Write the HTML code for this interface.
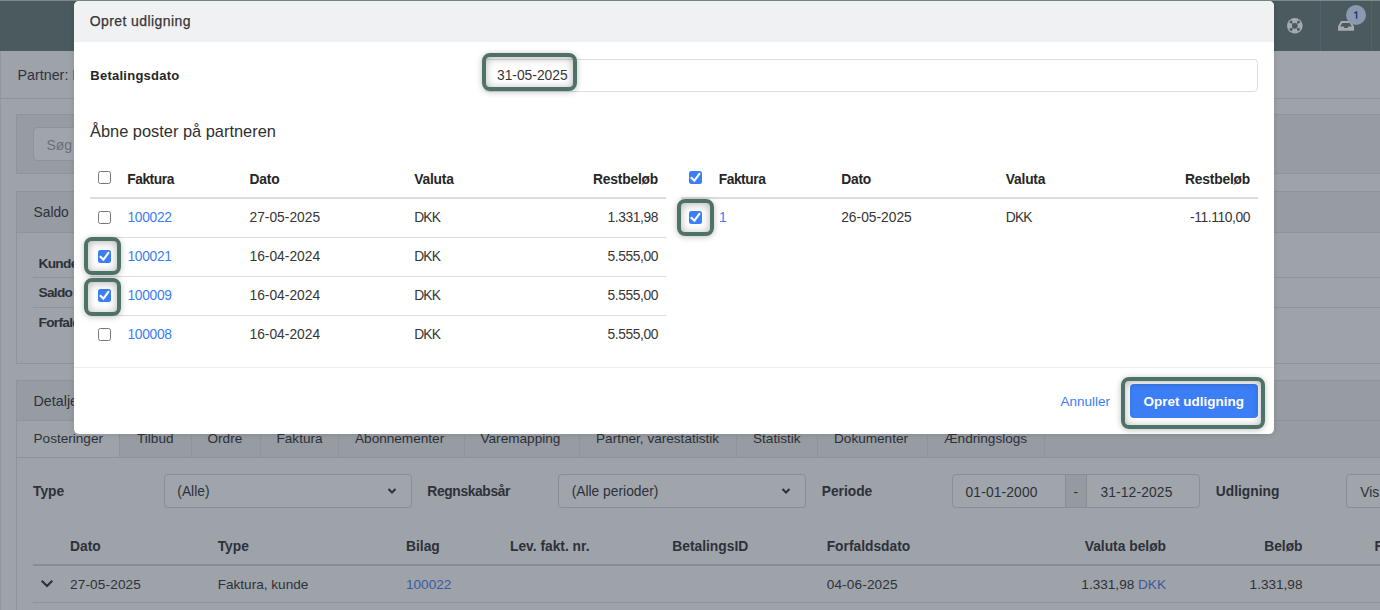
<!DOCTYPE html>
<html><head><meta charset="utf-8">
<style>
*{box-sizing:border-box;margin:0;padding:0}
html,body{width:1380px;height:610px;overflow:hidden}
body{position:relative;font-family:"Liberation Sans",sans-serif;font-size:13px;color:#2c2f33;background:#9ea2a9}
.a{position:absolute;white-space:nowrap;line-height:normal}
.bgtxt{color:#2d3139}
.bgb{font-weight:bold;color:#2d3139}
.t{color:#363636}
.b{font-weight:bold;color:#262626}
.lnk{color:#3b7ef6}
.cb{position:absolute;width:13px;height:13px;border:1px solid #767676;border-radius:2.5px;background:#fff}
.cbc{position:absolute;width:13px;height:13px;border-radius:2.5px;background:#3b7ef6}
.cbc svg{position:absolute;left:0;top:0}
.hl{position:absolute;border:4px solid #4e7268;border-radius:8px;box-shadow:inset 0 1px 8px rgba(0,0,0,.3),0 1px 6px rgba(0,0,0,.25)}
</style></head><body>
<div class="a" style="left:0px;top:0px;width:1380px;height:1px;background:#7b8b89"></div>
<div class="a" style="left:0px;top:1px;width:1380px;height:50px;background:#4a5a5f"></div>
<div class="a" style="left:1320px;top:1px;width:1px;height:50px;background:#53636a"></div>
<div class="a" style="left:1371px;top:1px;width:1px;height:50px;background:#53636a"></div>
<svg class="a" style="left:1286px;top:17px" width="18" height="18" viewBox="0 0 18 18">
<circle cx="8.8" cy="8.8" r="7.8" fill="#a6a9ae"/><circle cx="8.8" cy="8.8" r="2.9" fill="#4a5a5f"/>
<g fill="#4a5a5f">
<path id="wd" d="M7.1 2.8 L8.8 2.1 L10.5 2.8 L9.6 4.8 L8.8 5.8 L8.0 4.8 Z" transform="rotate(-45 8.8 8.8)"/>
<path d="M7.1 2.8 L8.8 2.1 L10.5 2.8 L9.6 4.8 L8.8 5.8 L8.0 4.8 Z" transform="rotate(45 8.8 8.8)"/>
<path d="M7.1 2.8 L8.8 2.1 L10.5 2.8 L9.6 4.8 L8.8 5.8 L8.0 4.8 Z" transform="rotate(135 8.8 8.8)"/>
<path d="M7.1 2.8 L8.8 2.1 L10.5 2.8 L9.6 4.8 L8.8 5.8 L8.0 4.8 Z" transform="rotate(225 8.8 8.8)"/>
</g>
</svg>
<svg class="a" style="left:1337px;top:19px" width="18" height="14" viewBox="0 0 18 14">
<path d="M1 7.5 L4 2 L14 2 L17 7.5 L17 11.2 Q17 11.8 16.4 11.8 L1.6 11.8 Q1 11.8 1 11.2 Z" fill="#a6a9ae"/>
<path d="M3.2 7.5 L5.2 4 L12.8 4 L14.8 7.5 L11.5 7.5 L10.5 9 L7.5 9 L6.5 7.5 Z" fill="#4a5a5f"/>
</svg>
<div class="a" style="left:1346px;top:5px;width:20px;height:20px;border-radius:50%;background:#8a99b0"></div>
<svg class="a" style="left:1350px;top:9px" width="12" height="12" viewBox="0 0 12 12"><path d="M4.3 4.2 L6.6 2.9 L6.6 9.8" fill="none" stroke="#2a3470" stroke-width="1.4" stroke-linejoin="round"/></svg>
<div class="a" style="left:0px;top:51px;width:1px;height:560px;background:#93979e"></div>
<div class="a" style="left:0px;top:98px;width:1380px;height:1px;background:#8f939a"></div>
<div class="a " style="left:17.50px;top:66.76px;font-size:14.3px;color:#2e3242">Partner: I</div>
<div class="a" style="left:16px;top:114px;width:1400px;height:60px;background:#979ba2;border:1px solid #8f939a"></div>
<div class="a" style="left:33px;top:127px;width:240px;height:34px;background:#a0a4ab;border:1px solid #8f939a;border-radius:4px"></div>
<div class="a " style="left:46.40px;top:137.03px;font-size:14px;color:#6b717c">Søg</div>
<div class="a" style="left:16px;top:191px;width:1400px;height:173px;background:#9ea2a9;border:1px solid #8f939a"></div>
<div class="a" style="left:17px;top:192px;width:1400px;height:41px;background:#979ba2;border-bottom:1px solid #8f939a"></div>
<div class="a " style="left:33.50px;top:204.61px;font-size:13.8px;color:#2d3139">Saldo</div>
<div class="a bgb" style="left:38.50px;top:255.90px;font-size:13.7px;letter-spacing:-.7px">Kunde</div>
<div class="a" style="left:33px;top:277px;width:1400px;height:1px;background:#8f939a"></div>
<div class="a bgb" style="left:38.50px;top:285.40px;font-size:13.7px;letter-spacing:-.7px">Saldo</div>
<div class="a" style="left:33px;top:307px;width:1400px;height:1px;background:#8f939a"></div>
<div class="a bgb" style="left:38.50px;top:314.60px;font-size:13.7px;letter-spacing:-.7px">Forfald</div>
<div class="a" style="left:16px;top:380px;width:1400px;height:300px;background:#9ea2a9;border:1px solid #8f939a"></div>
<div class="a" style="left:17px;top:381px;width:1400px;height:76px;background:#979ba2"></div>
<div class="a" style="left:17px;top:420px;width:1400px;height:1px;background:#8f939a"></div>
<div class="a" style="left:17px;top:457px;width:1400px;height:1px;background:#8f939a"></div>
<div class="a " style="left:33.50px;top:393.06px;font-size:14.3px;color:#2d3139">Detaljer</div>
<div class="a" style="left:17px;top:421px;width:102px;height:36px;background:#9ea2a9"></div>
<div class="a bgtxt" style="left:33.50px;top:431.09px;font-size:13.6px;">Posteringer</div>
<div class="a" style="left:119px;top:421px;width:1px;height:36px;background:#8f939a"></div>
<div class="a bgtxt" style="left:137.00px;top:431.09px;font-size:13.6px;">Tilbud</div>
<div class="a" style="left:191px;top:421px;width:1px;height:36px;background:#8f939a"></div>
<div class="a bgtxt" style="left:207.50px;top:431.09px;font-size:13.6px;">Ordre</div>
<div class="a" style="left:260px;top:421px;width:1px;height:36px;background:#8f939a"></div>
<div class="a bgtxt" style="left:276.50px;top:431.09px;font-size:13.6px;">Faktura</div>
<div class="a" style="left:338px;top:421px;width:1px;height:36px;background:#8f939a"></div>
<div class="a bgtxt" style="left:355.00px;top:431.09px;font-size:13.6px;">Abonnementer</div>
<div class="a" style="left:464px;top:421px;width:1px;height:36px;background:#8f939a"></div>
<div class="a bgtxt" style="left:480.50px;top:431.09px;font-size:13.6px;">Varemapping</div>
<div class="a" style="left:579px;top:421px;width:1px;height:36px;background:#8f939a"></div>
<div class="a bgtxt" style="left:596.00px;top:431.09px;font-size:13.6px;">Partner, varestatistik</div>
<div class="a" style="left:736px;top:421px;width:1px;height:36px;background:#8f939a"></div>
<div class="a bgtxt" style="left:753.00px;top:431.09px;font-size:13.6px;">Statistik</div>
<div class="a" style="left:817px;top:421px;width:1px;height:36px;background:#8f939a"></div>
<div class="a bgtxt" style="left:834.00px;top:431.09px;font-size:13.6px;">Dokumenter</div>
<div class="a" style="left:927px;top:421px;width:1px;height:36px;background:#8f939a"></div>
<div class="a bgtxt" style="left:944.00px;top:431.09px;font-size:13.6px;">Ændringslogs</div>
<div class="a" style="left:1044px;top:421px;width:1px;height:36px;background:#8f939a"></div>
<div class="a bgb" style="left:33.00px;top:483.51px;font-size:13.8px;">Type</div>
<div class="a" style="left:164px;top:474px;width:248px;height:34px;border:1px solid #898d94;border-radius:4px;background:#a0a4ab"></div>
<div class="a bgtxt" style="left:177.30px;top:483.51px;font-size:13.8px;">(Alle)</div>
<div class="a bgb" style="left:427.30px;top:483.51px;font-size:13.8px;letter-spacing:-.35px">Regnskabsår</div>
<div class="a" style="left:558px;top:474px;width:248px;height:34px;border:1px solid #898d94;border-radius:4px;background:#a0a4ab"></div>
<div class="a bgtxt" style="left:571.70px;top:483.51px;font-size:13.8px;">(Alle perioder)</div>
<div class="a bgb" style="left:821.70px;top:483.51px;font-size:13.8px;">Periode</div>
<div class="a" style="left:952px;top:474px;width:248px;height:34px;border:1px solid #898d94;border-radius:4px;background:#a0a4ab"></div>
<div class="a" style="left:1065px;top:475px;width:22px;height:32px;background:#959aa1;border-left:1px solid #898d94;border-right:1px solid #898d94"></div>
<div class="a bgtxt" style="left:965.50px;top:484.51px;font-size:13.8px;letter-spacing:.15px">01-01-2000</div>
<div class="a bgtxt" style="left:1073.50px;top:484.51px;font-size:13.8px;">-</div>
<div class="a bgtxt" style="left:1100.40px;top:484.51px;font-size:13.8px;letter-spacing:.15px">31-12-2025</div>
<div class="a bgb" style="left:1215.80px;top:483.51px;font-size:13.8px;">Udligning</div>
<div class="a" style="left:1346px;top:474px;width:100px;height:34px;border:1px solid #898d94;border-radius:4px;background:#a0a4ab"></div>
<div class="a bgtxt" style="left:1360.30px;top:484.51px;font-size:13.8px;">Vis</div>
<svg class="a" style="left:386.5px;top:487px" width="10" height="8" viewBox="0 0 10 8"><path d="M1.5 2 L5 5.5 L8.5 2" fill="none" stroke="#2d3139" stroke-width="2"/></svg>
<svg class="a" style="left:780.5px;top:487px" width="10" height="8" viewBox="0 0 10 8"><path d="M1.5 2 L5 5.5 L8.5 2" fill="none" stroke="#2d3139" stroke-width="2"/></svg>
<div class="a bgb" style="left:70.00px;top:538.51px;font-size:13.8px;">Dato</div>
<div class="a bgb" style="left:217.70px;top:538.51px;font-size:13.8px;">Type</div>
<div class="a bgb" style="left:406.00px;top:538.51px;font-size:13.8px;">Bilag</div>
<div class="a bgb" style="left:510.00px;top:538.51px;font-size:13.8px;">Lev. fakt. nr.</div>
<div class="a bgb" style="left:672.30px;top:538.51px;font-size:13.8px;">BetalingsID</div>
<div class="a bgb" style="left:826.70px;top:538.51px;font-size:13.8px;">Forfaldsdato</div>
<div class="a bgb" style="right:214.00px;top:538.51px;font-size:13.8px;">Valuta beløb</div>
<div class="a bgb" style="right:77.50px;top:538.51px;font-size:13.8px;">Beløb</div>
<div class="a bgb" style="left:1374.50px;top:538.51px;font-size:13.8px;">R</div>
<div class="a" style="left:33px;top:564px;width:1400px;height:2px;background:#898d94"></div>
<div class="a" style="left:33px;top:602px;width:1400px;height:1px;background:#8f939a"></div>
<svg class="a" style="left:40px;top:578px" width="14" height="10" viewBox="0 0 14 10"><path d="M1.7 2.7 L7 8 L12.3 2.7" fill="none" stroke="#2d3139" stroke-width="2.1"/></svg>
<div class="a bgtxt" style="left:70.00px;top:576.69px;font-size:13.6px;letter-spacing:.15px">27-05-2025</div>
<div class="a bgtxt" style="left:217.70px;top:576.69px;font-size:13.6px;">Faktura, kunde</div>
<div class="a " style="left:406.00px;top:576.69px;font-size:13.6px;color:#3d5aa0">100022</div>
<div class="a bgtxt" style="left:826.70px;top:576.69px;font-size:13.6px;letter-spacing:.15px">04-06-2025</div>
<div class="a bgtxt" style="right:214.00px;top:576.69px;font-size:13.6px;">1.331,98 <span style="color:#3d5aa0">DKK</span></div>
<div class="a bgtxt" style="right:77.50px;top:576.69px;font-size:13.6px;">1.331,98</div>
<div class="a" style="left:74px;top:1px;width:1200px;height:433px;background:#fff;border-radius:5px;box-shadow:0 0 6px rgba(0,0,0,.12)"></div>
<div class="a" style="left:74px;top:1px;width:1200px;height:41px;background:#f0f1f3;border-radius:5px 5px 0 0"></div>
<div class="a t" style="left:89.70px;top:13.33px;font-size:14px;letter-spacing:.42px;-webkit-text-stroke:.25px #363636">Opret udligning</div>
<div class="a b" style="left:90.30px;top:67.73px;font-size:13px;letter-spacing:.25px">Betalingsdato</div>
<div class="a" style="left:484px;top:59px;width:774px;height:33px;border:1px solid #dcdfe3;border-radius:4px"></div>
<div class="a t" style="left:497.00px;top:67.81px;font-size:13.8px;">31-05-2025</div>
<div class="a t" style="left:90.00px;top:122.16px;font-size:16.4px;color:#303030">Åbne poster på partneren</div>
<div class="cb" style="left:98px;top:171px"></div>
<div class="a b" style="left:127.20px;top:171.51px;font-size:13.8px;letter-spacing:-.45px">Faktura</div>
<div class="a b" style="left:249.50px;top:171.51px;font-size:13.8px;letter-spacing:-.2px">Dato</div>
<div class="a b" style="left:414.20px;top:171.51px;font-size:13.8px;letter-spacing:-.2px">Valuta</div>
<div class="a b" style="right:722.00px;top:171.51px;font-size:13.8px;letter-spacing:-.2px">Restbeløb</div>
<div class="a" style="left:90px;top:197px;width:576px;height:2px;background:#dcdddf"></div>
<div class="cb" style="left:98px;top:211px"></div>
<div class="a lnk" style="left:127.50px;top:210.11px;font-size:13.8px;letter-spacing:-.3px">100022</div>
<div class="a t" style="left:249.50px;top:210.11px;font-size:13.8px;">27-05-2025</div>
<div class="a t" style="left:414.20px;top:210.11px;font-size:13.8px;letter-spacing:-.8px">DKK</div>
<div class="a t" style="right:722.00px;top:210.11px;font-size:13.8px;letter-spacing:-.4px">1.331,98</div>
<div class="a" style="left:90px;top:237px;width:576px;height:1px;background:#dcdddf"></div>
<div class="cbc" style="left:98px;top:250px"><svg width="13" height="13" viewBox="0 0 13 13"><path d="M2.6 6.9 L5.4 9.6 L10.3 3.0" fill="none" stroke="#fff" stroke-width="2.1" stroke-linecap="square" stroke-linejoin="miter"/></svg></div>
<div class="a lnk" style="left:127.50px;top:249.11px;font-size:13.8px;letter-spacing:-.3px">100021</div>
<div class="a t" style="left:249.50px;top:249.11px;font-size:13.8px;">16-04-2024</div>
<div class="a t" style="left:414.20px;top:249.11px;font-size:13.8px;letter-spacing:-.8px">DKK</div>
<div class="a t" style="right:722.00px;top:249.11px;font-size:13.8px;letter-spacing:-.4px">5.555,00</div>
<div class="a" style="left:90px;top:276px;width:576px;height:1px;background:#dcdddf"></div>
<div class="cbc" style="left:98px;top:289px"><svg width="13" height="13" viewBox="0 0 13 13"><path d="M2.6 6.9 L5.4 9.6 L10.3 3.0" fill="none" stroke="#fff" stroke-width="2.1" stroke-linecap="square" stroke-linejoin="miter"/></svg></div>
<div class="a lnk" style="left:127.50px;top:288.11px;font-size:13.8px;letter-spacing:-.3px">100009</div>
<div class="a t" style="left:249.50px;top:288.11px;font-size:13.8px;">16-04-2024</div>
<div class="a t" style="left:414.20px;top:288.11px;font-size:13.8px;letter-spacing:-.8px">DKK</div>
<div class="a t" style="right:722.00px;top:288.11px;font-size:13.8px;letter-spacing:-.4px">5.555,00</div>
<div class="a" style="left:90px;top:315px;width:576px;height:1px;background:#dcdddf"></div>
<div class="cb" style="left:98px;top:328px"></div>
<div class="a lnk" style="left:127.50px;top:327.11px;font-size:13.8px;letter-spacing:-.3px">100008</div>
<div class="a t" style="left:249.50px;top:327.11px;font-size:13.8px;">16-04-2024</div>
<div class="a t" style="left:414.20px;top:327.11px;font-size:13.8px;letter-spacing:-.8px">DKK</div>
<div class="a t" style="right:722.00px;top:327.11px;font-size:13.8px;letter-spacing:-.4px">5.555,00</div>
<div class="cbc" style="left:689px;top:171px"><svg width="13" height="13" viewBox="0 0 13 13"><path d="M2.6 6.9 L5.4 9.6 L10.3 3.0" fill="none" stroke="#fff" stroke-width="2.1" stroke-linecap="square" stroke-linejoin="miter"/></svg></div>
<div class="a b" style="left:718.70px;top:171.51px;font-size:13.8px;letter-spacing:-.45px">Faktura</div>
<div class="a b" style="left:841.20px;top:171.51px;font-size:13.8px;letter-spacing:-.2px">Dato</div>
<div class="a b" style="left:1005.80px;top:171.51px;font-size:13.8px;letter-spacing:-.2px">Valuta</div>
<div class="a b" style="right:130.00px;top:171.51px;font-size:13.8px;letter-spacing:-.2px">Restbeløb</div>
<div class="a" style="left:681px;top:197px;width:577px;height:2px;background:#dcdddf"></div>
<div class="cbc" style="left:689px;top:211px"><svg width="13" height="13" viewBox="0 0 13 13"><path d="M2.6 6.9 L5.4 9.6 L10.3 3.0" fill="none" stroke="#fff" stroke-width="2.1" stroke-linecap="square" stroke-linejoin="miter"/></svg></div>
<div class="a lnk" style="left:719.00px;top:210.11px;font-size:13.8px;letter-spacing:-.3px">1</div>
<div class="a t" style="left:841.20px;top:210.11px;font-size:13.8px;">26-05-2025</div>
<div class="a t" style="left:1005.80px;top:210.11px;font-size:13.8px;letter-spacing:-.8px">DKK</div>
<div class="a t" style="right:130.00px;top:210.11px;font-size:13.8px;letter-spacing:-.4px">-11.110,00</div>
<div class="a" style="left:74px;top:367px;width:1200px;height:1px;background:#eceef0"></div>
<div class="a lnk" style="left:1060.50px;top:393.78px;font-size:13.5px;">Annuller</div>
<div class="a" style="left:1130px;top:384px;width:128px;height:34px;background:#3b7ef6;border-radius:4px"></div>
<div class="a b" style="left:1143.40px;top:393.78px;font-size:13.5px;color:#fff">Opret udligning</div>
<div class="hl" style="left:482px;top:53px;width:95px;height:38px"></div>
<div class="hl" style="left:84px;top:237px;width:37px;height:38px"></div>
<div class="hl" style="left:84px;top:278px;width:37px;height:38px"></div>
<div class="hl" style="left:677px;top:199px;width:37px;height:37px"></div>
<div class="hl" style="left:1121px;top:377px;width:144px;height:52px"></div>
</body></html>
